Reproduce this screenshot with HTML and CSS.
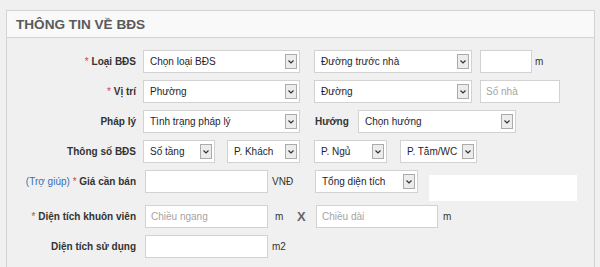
FILE: index.html
```html
<!DOCTYPE html>
<html lang="vi">
<head>
    <meta charset="UTF-8">
    <title>Thông tin về BĐS</title>
    <link rel="stylesheet" href="styles.css">
</head>
<body>
    <div class="panel">
        <h2 class="panel-title">THÔNG TIN VỀ BĐS</h2>

        <div class="panel-body">
            <div class="row">
                <label class="lbl"><span class="req">*</span> Loại BĐS</label>
                <div class="sel w157"><span>Chọn loại BĐS</span><i class="arr"><svg width="6" height="4" viewBox="0 0 6 4"><polyline points="0.5,0.5 3,3 5.5,0.5" fill="none" stroke="#333" stroke-width="1.2"/></svg></i></div>
                <div class="sel w158 ml14"><span>Đường trước nhà</span><i class="arr"><svg width="6" height="4" viewBox="0 0 6 4"><polyline points="0.5,0.5 3,3 5.5,0.5" fill="none" stroke="#333" stroke-width="1.2"/></svg></i></div>
                <input class="txt w52 ml8" type="text">
                <span class="unit ml3">m</span>
            </div>

            <div class="row">
                <label class="lbl"><span class="req">*</span> Vị trí</label>
                <div class="sel w157"><span>Phường</span><i class="arr"><svg width="6" height="4" viewBox="0 0 6 4"><polyline points="0.5,0.5 3,3 5.5,0.5" fill="none" stroke="#333" stroke-width="1.2"/></svg></i></div>
                <div class="sel w158 ml14"><span>Đường</span><i class="arr"><svg width="6" height="4" viewBox="0 0 6 4"><polyline points="0.5,0.5 3,3 5.5,0.5" fill="none" stroke="#333" stroke-width="1.2"/></svg></i></div>
                <input class="txt w80 ml8" type="text" placeholder="Số nhà">
            </div>

            <div class="row">
                <label class="lbl">Pháp lý</label>
                <div class="sel w157"><span>Tình trạng pháp lý</span><i class="arr"><svg width="6" height="4" viewBox="0 0 6 4"><polyline points="0.5,0.5 3,3 5.5,0.5" fill="none" stroke="#333" stroke-width="1.2"/></svg></i></div>
                <label class="lbl-inline">Hướng</label>
                <div class="sel w158"><span>Chọn hướng</span><i class="arr"><svg width="6" height="4" viewBox="0 0 6 4"><polyline points="0.5,0.5 3,3 5.5,0.5" fill="none" stroke="#333" stroke-width="1.2"/></svg></i></div>
            </div>

            <div class="row">
                <label class="lbl">Thông số BĐS</label>
                <div class="sel w72"><span>Số tầng</span><i class="arr"><svg width="6" height="4" viewBox="0 0 6 4"><polyline points="0.5,0.5 3,3 5.5,0.5" fill="none" stroke="#333" stroke-width="1.2"/></svg></i></div>
                <div class="sel w73 ml12"><span>P. Khách</span><i class="arr"><svg width="6" height="4" viewBox="0 0 6 4"><polyline points="0.5,0.5 3,3 5.5,0.5" fill="none" stroke="#333" stroke-width="1.2"/></svg></i></div>
                <div class="sel w73 ml14"><span>P. Ngủ</span><i class="arr"><svg width="6" height="4" viewBox="0 0 6 4"><polyline points="0.5,0.5 3,3 5.5,0.5" fill="none" stroke="#333" stroke-width="1.2"/></svg></i></div>
                <div class="sel w77 ml13"><span>P. Tắm/WC</span><i class="arr"><svg width="6" height="4" viewBox="0 0 6 4"><polyline points="0.5,0.5 3,3 5.5,0.5" fill="none" stroke="#333" stroke-width="1.2"/></svg></i></div>
            </div>

            <div class="row row-price">
                <label class="lbl"><a class="help" href="#">(Trợ giúp)</a> <span class="req">*</span> Giá cần bán</label>
                <input class="txt w123 ml2" type="text">
                <span class="unit unit-vnd">VNĐ</span>
                <div class="sel w103"><span>Tổng diện tích</span><i class="arr"><svg width="6" height="4" viewBox="0 0 6 4"><polyline points="0.5,0.5 3,3 5.5,0.5" fill="none" stroke="#333" stroke-width="1.2"/></svg></i></div>
                <div class="blank-box"></div>
            </div>

            <div class="row row-area">
                <label class="lbl"><span class="req">*</span> Diện tích khuôn viên</label>
                <input class="txt w123 ml2" type="text" placeholder="Chiều ngang">
                <span class="unit unit-m">m</span>
                <span class="times">X</span>
                <input class="txt w122" type="text" placeholder="Chiều dài">
                <span class="unit ml5">m</span>
            </div>

            <div class="row">
                <label class="lbl">Diện tích sử dụng</label>
                <input class="txt w123 ml2" type="text">
                <span class="unit ml4">m2</span>
            </div>
        </div>
    </div>
</body>
</html>
```

FILE: styles.css
```css
* {
    box-sizing: border-box;
    margin: 0;
    padding: 0;
}

html,
body {
    height: 100%;
    overflow: hidden;
}

body {
    font-family: "Liberation Sans", Arial, sans-serif;
    font-size: 10px;
    color: #333;
    background-color: #f0f0f0;
    padding: 10px 5px 0 6px;
}

.panel {
    border: 1px solid #d3d3d3;
    border-bottom: none;
    height: 100%;
}

.panel-title {
    background-color: #f8f9f8;
    border-bottom: 1px solid #d3d3d3;
    height: 27px;
    padding: 7px 0 0 9px;
    font-size: 13.6px;
    font-weight: bold;
    color: #5a5a5a;
    line-height: 14px;
}

.panel-body {
    padding-top: 12px;
}

/* form rows */
.row {
    display: flex;
    align-items: center;
    height: 23px;
    margin-bottom: 7px;
}

.row-price {
    margin-top: 2px;
    margin-bottom: 12px;
}

.lbl {
    width: 129px;
    margin-right: 7px;
    text-align: right;
    font-weight: bold;
    color: #333;
    white-space: nowrap;
}

.lbl-inline {
    width: 43px;
    margin-left: 15px;
    font-weight: bold;
    color: #333;
}

.req {
    color: #e03c3c;
    font-weight: normal;
}

.help {
    color: #3b6fb6;
    font-weight: normal;
    text-decoration: none;
}

/* fake select */
.sel {
    display: flex;
    align-items: center;
    height: 23px;
    background-color: #fff;
    border: 1px solid #d2d2d2;
    padding-left: 6px;
    color: #1e1e2e;
    white-space: nowrap;
    overflow: hidden;
}

.sel span {
    flex: 1;
    overflow: hidden;
}

.arr {
    display: flex;
    align-items: center;
    justify-content: center;
    flex-shrink: 0;
    width: 12px;
    height: 15px;
    margin-right: 2px;
    background-color: #ececec;
    border: 1px solid #ababab;
}

.txt {
    height: 23px;
    background-color: #fff;
    border: 1px solid #d2d2d2;
    padding-left: 5px;
    font-family: "Liberation Sans", Arial, sans-serif;
    font-size: 10px;
    color: #222;
    outline: none;
}

.txt::placeholder {
    color: #a4a4a4;
}

.unit {
    color: #333;
}

.unit-vnd {
    width: 43px;
    margin-left: 4px;
}

.unit-m {
    width: 22px;
    margin-left: 7px;
}

.times {
    width: 19px;
    font-size: 13px;
    font-weight: bold;
    color: #666;
}

.blank-box {
    align-self: flex-start;
    width: 148px;
    height: 26px;
    margin-left: 11px;
    margin-top: 5px;
    background-color: #fff;
}

/* widths and gaps */
.w52 { width: 52px; }
.w72 { width: 72px; }
.w73 { width: 73px; }
.w77 { width: 77px; }
.w80 { width: 80px; }
.w103 { width: 103px; }
.w122 { width: 122px; }
.w123 { width: 123px; }
.w157 { width: 157px; }
.w158 { width: 158px; }

.ml2 { margin-left: 2px; }
.ml3 { margin-left: 3px; }
.ml4 { margin-left: 4px; }
.ml5 { margin-left: 5px; }
.ml8 { margin-left: 8px; }
.ml12 { margin-left: 12px; }
.ml13 { margin-left: 13px; }
.ml14 { margin-left: 14px; }
```
